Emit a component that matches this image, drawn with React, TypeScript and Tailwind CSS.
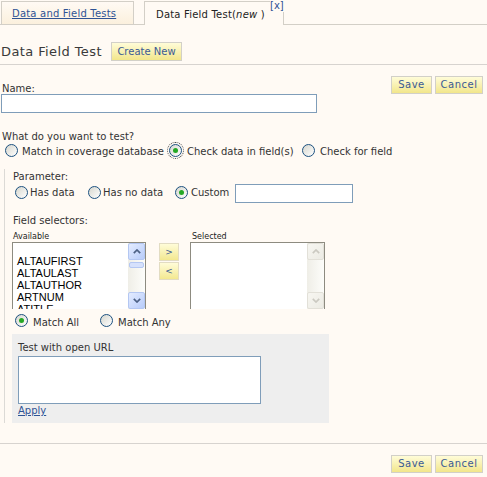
import React from "react";

function Radio({ checked = false, focused = false, className = "" }: { checked?: boolean; focused?: boolean; className?: string }) {
  return (
    <span
      className={`relative flex h-[13px] w-[13px] shrink-0 items-center justify-center rounded-full border border-[#1c5180] bg-linear-to-br from-[#d6d6ce] to-white ${
        focused ? "outline-1 outline-dotted outline-[#444] outline-offset-[1px]" : ""
      } ${className}`}
    >
      {checked && <span className="h-[5px] w-[5px] rounded-full bg-[#25a825]" />}
    </span>
  );
}

function YButton({ label, w }: { label: string; w: string }) {
  return (
    <div
      className={`flex h-[18px] ${w} items-center justify-center border border-[#d2d0c8] bg-linear-to-b from-[#fffcd8] to-[#f2e68a] leading-none tracking-[0.5px] text-[#3b5a94]`}
    >
      {label}
    </div>
  );
}

function Arrow({ up, color }: { up: boolean; color: string }) {
  return (
    <svg width="8" height="5" viewBox="0 0 8 5">
      <path d={up ? "M0.8 4.2 L4 1 L7.2 4.2" : "M0.8 0.8 L4 4 L7.2 0.8"} stroke={color} strokeWidth="1.7" fill="none" />
    </svg>
  );
}

function ScrollBar({ disabled = false }: { disabled?: boolean }) {
  const btn = disabled
    ? "border-[#e2e0d8] bg-linear-to-br from-[#f7f6f1] to-[#ecebe4]"
    : "border-[#b4c7f2] bg-linear-to-br from-[#e4ecff] to-[#b8ccfa]";
  const color = disabled ? "#cbc9c1" : "#4d6185";
  return (
    <div className="flex h-full w-[17px] shrink-0 flex-col bg-linear-to-r from-[#efeee7] to-[#fdfdfa]">
      <div className={`flex h-[17px] shrink-0 items-center justify-center rounded-[2px] border ${btn}`}>
        <Arrow up color={color} />
      </div>
      {!disabled && (
        <div className="mx-[1px] mt-[2px] h-[6px] shrink-0 rounded-[2px] border border-[#b4c7f2] bg-[#d6e1fc]" />
      )}
      <div className="flex-1" />
      <div className={`flex h-[17px] shrink-0 items-center justify-center rounded-[2px] border ${btn}`}>
        <Arrow up={false} color={color} />
      </div>
    </div>
  );
}

export default function App() {
  return (
    <div className="h-[477px] w-[487px] overflow-hidden bg-[#fffaf4] font-['DejaVu_Sans',sans-serif] text-[10px] text-[#333]">
      {/* tabs */}
      <div className="relative flex h-[25px] items-end border-b border-[#d3cfc7] pl-[1px]">
        <div className="h-[23px] w-[133px] whitespace-nowrap border border-b-0 border-[#d3cfc7] bg-linear-to-b from-[#fffaf4] to-[#fbf0dd] pl-[10px] pt-[6px] leading-[12px] tracking-[0.2px]">
          <a className="text-[#2e5395] underline">Data and Field Tests</a>
        </div>
        <div className="-mb-px ml-[10px] h-[24px] w-[140px] whitespace-nowrap border border-b-0 border-[#d3cfc7] bg-[#fffaf4] pl-[11px] pt-[7px] leading-[12px] tracking-[0.2px] text-[#222]">
          Data Field Test(<i>new</i> )
        </div>
        <span className="absolute left-[270px] top-0 h-[12px] w-[14px] bg-[#fffaf4] leading-[12px] text-[#2e5395]">[x]</span>
      </div>

      {/* heading */}
      <div className="mt-[17px] flex h-[19px] items-center pl-[1px]">
        <span className="w-[100px] shrink-0 whitespace-nowrap text-[13px] leading-[17px] tracking-[0.4px] text-[#3a3a3a]">Data Field Test</span>
        <div className="ml-[10px] flex h-[19px] w-[71px] shrink-0 items-center justify-center whitespace-nowrap border border-[#d2d0c8] bg-linear-to-b from-[#fffcd8] to-[#f2e68a] leading-none text-[#3b5a94]">
          Create New
        </div>
      </div>
      <div className="mt-[3px] h-px bg-[#d7d3cf]" />

      {/* name + buttons */}
      <div className="flex justify-between">
        <div className="flex flex-col pl-[1px] pt-[19px]">
          <span className="ml-[1px] h-[10px] leading-[10px]">Name:</span>
          <div className="h-[19px] w-[316px] border border-[#7f9db9] bg-white" />
        </div>
        <div className="flex gap-[3px] pr-[4px] pt-[11px]">
          <YButton label="Save" w="w-[41px]" />
          <YButton label="Cancel" w="w-[48px]" />
        </div>
      </div>

      <div className="ml-[2px] mt-[18px] h-[12px] leading-[12px]">What do you want to test?</div>
      <div className="mt-[1px] flex h-[13px] items-start whitespace-nowrap pl-[5px]">
        <Radio />
        <span className="ml-[4px] mt-[2px] w-[147px] leading-[12px]">Match in coverage database</span>
        <Radio checked focused />
        <span className="ml-[5px] mt-[2px] w-[115px] leading-[12px]">Check data in field(s)</span>
        <Radio />
        <span className="ml-[5px] mt-[2px] leading-[12px]">Check for field</span>
      </div>

      {/* parameter section */}
      <div className="ml-[4px] mt-[12px] border-l border-[#dcdad6] pl-[7px] pt-[2px]">
        <div className="ml-[1px] h-[12px] leading-[12px]">Parameter:</div>
        <div className="mt-[1px] flex h-[19px] items-start whitespace-nowrap">
          <Radio className="ml-[3px] mt-[2px]" />
          <span className="ml-[2px] mt-[3px] w-[58px] leading-[12px]">Has data</span>
          <Radio className="mt-[2px]" />
          <span className="ml-[2px] mt-[3px] w-[72px] leading-[12px]">Has no data</span>
          <Radio checked className="mt-[2px]" />
          <span className="ml-[3px] mt-[3px] w-[44px] leading-[12px]">Custom</span>
          <div className="h-[19px] w-[118px] border border-[#7f9db9] bg-white" />
        </div>

        <div className="ml-[1px] mt-[12px] h-[12px] leading-[12px]">Field selectors:</div>
        <div className="mt-[5px] flex h-[9px] text-[8px] leading-[9px] text-[#222]">
          <span className="ml-[1px] w-[179px]">Available</span>
          <span>Selected</span>
        </div>

        <div className="mt-[1px] flex">
          <div className="flex h-[67px] w-[134px] overflow-hidden border border-b-0 border-[#8d8b80] bg-white">
            <div className="flex-1 pl-[4px] pt-[12px] font-['Liberation_Sans',Arial,sans-serif] text-[11px] leading-[12px] text-black">
              <div>ALTAUFIRST</div>
              <div>ALTAULAST</div>
              <div>ALTAUTHOR</div>
              <div>ARTNUM</div>
              <div>ATITLE</div>
            </div>
            <ScrollBar />
          </div>
          <div className="ml-[13px] mt-[1px] flex flex-col gap-[1px]">
            <div className="flex h-[18px] w-[20px] items-center justify-center border border-[#e2dcc2] bg-linear-to-b from-[#fffcd8] to-[#f3e88f] text-[9px] leading-none text-[#3b5a94]">
              &gt;
            </div>
            <div className="flex h-[18px] w-[20px] items-center justify-center border border-[#e2dcc2] bg-linear-to-b from-[#fffcd8] to-[#f3e88f] text-[9px] leading-none text-[#3b5a94]">
              &lt;
            </div>
          </div>
          <div className="ml-[11px] flex h-[67px] w-[135px] overflow-hidden border border-b-0 border-[#8d8b80] bg-white">
            <div className="flex-1" />
            <ScrollBar disabled />
          </div>
        </div>

        <div className="mt-[5px] flex h-[13px] items-start whitespace-nowrap">
          <Radio checked className="ml-[3px]" />
          <span className="ml-[5px] mt-[3px] w-[67px] leading-[12px]">Match All</span>
          <Radio />
          <span className="ml-[5px] mt-[3px] leading-[12px]">Match Any</span>
        </div>

        <div className="mt-[7px] w-[317px] bg-[#eeeeee] pb-[6px] pl-[6px] pt-[8px]">
          <div className="h-[12px] leading-[12px]">Test with open URL</div>
          <div className="mt-[2px] h-[48px] w-[243px] border border-[#7f9db9] bg-white" />
          <div className="mt-[1px] h-[12px] leading-[12px]">
            <a className="text-[#2e5395] underline">Apply</a>
          </div>
        </div>
      </div>

      <div className="mt-[20px] h-px bg-[#d7d3cf]" />
      <div className="mt-[11px] flex justify-end gap-[3px] pr-[4px]">
        <YButton label="Save" w="w-[41px]" />
        <YButton label="Cancel" w="w-[48px]" />
      </div>
    </div>
  );
}
